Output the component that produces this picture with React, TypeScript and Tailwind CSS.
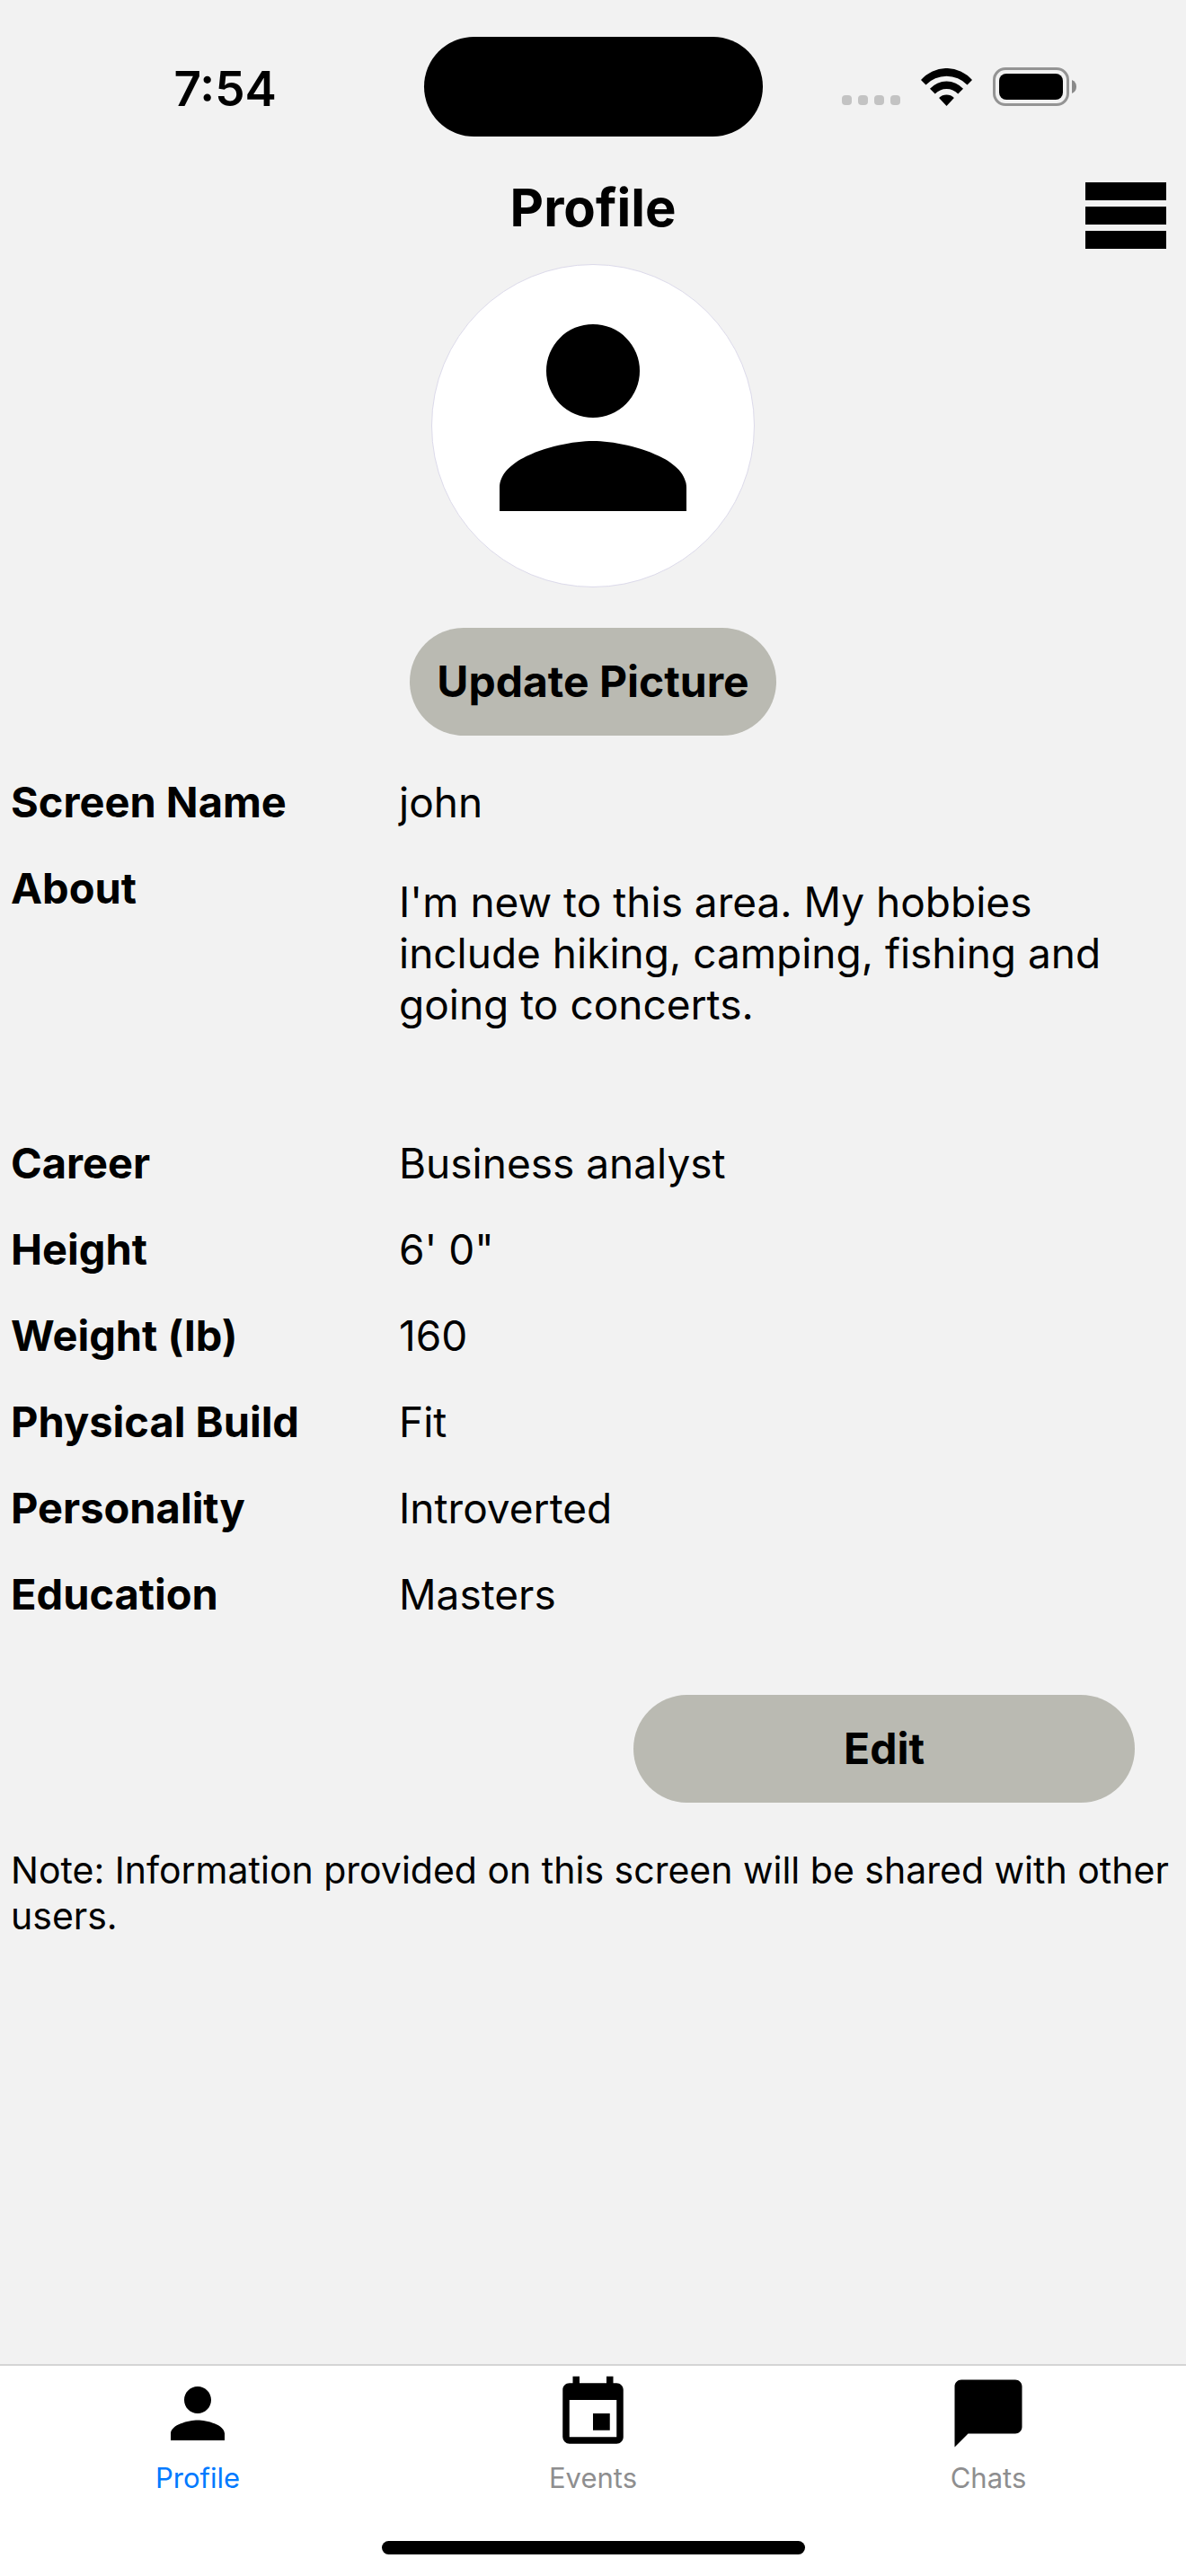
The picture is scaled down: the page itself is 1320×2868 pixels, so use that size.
import { useState } from "react";
import { MdChatBubble, MdEvent, MdPerson } from "react-icons/md";

const details = [
  { label: "Career", value: "Business analyst" },
  { label: "Height", value: "6' 0\"" },
  { label: "Weight (lb)", value: "160" },
  { label: "Physical Build", value: "Fit" },
  { label: "Personality", value: "Introverted" },
  { label: "Education", value: "Masters" },
];

const tabs = [
  { name: "Profile", Icon: MdPerson },
  { name: "Events", Icon: MdEvent },
  { name: "Chats", Icon: MdChatBubble },
];

function StatusBar() {
  return (
    <div className="grid grid-cols-[1fr_auto_1fr] items-center pt-[41px] pb-[25px]">
      <div className="pt-1 pl-[30px] text-center text-[53px] leading-[60px] font-semibold">
        7:54
      </div>
      <div className="h-[111px] w-[377px] rounded-full bg-black" />
      <div className="flex items-center justify-center pr-[34px]">
        <div className="mr-[23px] flex gap-[7px] pt-[30px]">
          <span className="size-[11px] rounded-[4px] bg-[#c3c3c3]" />
          <span className="size-[11px] rounded-[4px] bg-[#c3c3c3]" />
          <span className="size-[11px] rounded-[4px] bg-[#c3c3c3]" />
          <span className="size-[11px] rounded-[4px] bg-[#c3c3c3]" />
        </div>
        <svg className="mr-[23px]" width="57" height="42" viewBox="0 0 57 42">
          <path d="M0 13A37.7 37.7 0 0 1 57 13L51.5 18.5A32 32 0 0 0 5.5 18.5Z" />
          <path d="M10 22.7A25 25 0 0 1 47 22.7L41.3 28.5A17.5 17.5 0 0 0 15.7 28.5Z" />
          <path d="M20.1 33A12 12 0 0 1 36.9 33L28.5 42Z" />
        </svg>
        <svg width="93" height="43" viewBox="0 0 93 43">
          <rect
            x="1.5"
            y="1.5"
            width="82"
            height="40"
            rx="12.5"
            fill="none"
            stroke="#949494"
            strokeWidth="3"
          />
          <rect x="7" y="7" width="71" height="29" rx="8" />
          <path d="M88 14Q93 16 93 21.5T88 29Z" fill="#8a8a8a" />
        </svg>
      </div>
    </div>
  );
}

function Row({ label, value }: { label: string; value: string }) {
  return (
    <div className="grid grid-cols-[1fr_2fr] py-5">
      <dt className="text-[47px] leading-[56px] font-bold">{label}</dt>
      <dd>{value}</dd>
    </div>
  );
}

export default function App() {
  const [active, setActive] = useState("Profile");

  return (
    <div className="flex min-h-screen flex-col bg-[#f2f2f2] font-['Inter',sans-serif] text-black">
      <StatusBar />
      <header className="grid h-[117px] grid-cols-3 items-start">
        <h1 className="col-start-2 pt-[18px] text-center text-[58px] leading-[72px] font-bold">
          Profile
        </h1>
        <button
          aria-label="Menu"
          className="mt-[26px] mr-[22px] flex flex-col gap-[7px] justify-self-end"
        >
          <span className="h-5 w-[90px] bg-black" />
          <span className="h-5 w-[90px] bg-black" />
          <span className="h-5 w-[90px] bg-black" />
        </button>
      </header>

      <main className="flex flex-1 flex-col">
        <div className="flex flex-col items-center gap-[45px]">
          <div className="flex size-[360px] items-center justify-center rounded-full border border-[#dcdaea] bg-white">
            <svg width="312" height="312" viewBox="0 -0.2 24 24">
              <path d="M12 11.1a4 4 0 1 0 0-8 4 4 0 0 0 0 8zM12 13.1c-2.67 0-8 1.34-8 4v2h16v-2c0-2.66-5.33-4-8-4z" />
            </svg>
          </div>
          <button className="h-[120px] rounded-full bg-[#babab2] px-[30px] text-5xl font-bold">
            Update Picture
          </button>
        </div>

        <dl className="mt-[26px] px-3 text-[46px] leading-[56px]">
          <Row label="Screen Name" value="john" />
          <div className="grid min-h-[306px] grid-cols-[1fr_2fr]">
            <dt className="pt-5 text-[47px] leading-[56px] font-bold">About</dt>
            <dd className="pt-[35px] pr-12 leading-[57px]">
              I'm new to this area. My hobbies include hiking, camping, fishing
              and going to concerts.
            </dd>
          </div>
          {details.map((d) => (
            <Row key={d.label} label={d.label} value={d.value} />
          ))}
        </dl>

        <button className="mt-16 mr-[57px] h-[120px] w-[558px] self-end rounded-full bg-[#babab2] text-5xl font-bold">
          Edit
        </button>
        <p className="mt-[50px] pr-2 pl-3 text-[41px] leading-[51px]">
          Note: Information provided on this screen will be shared with other
          users.
        </p>
      </main>

      <footer className="border-t-2 border-[#d5d5d5] bg-white pb-6">
        <nav className="grid grid-cols-3 pt-2">
          {tabs.map(({ name, Icon }) => (
            <button
              key={name}
              onClick={() => setActive(name)}
              className="flex flex-col items-center"
            >
              <Icon className="size-[90px]" />
              <span
                className={
                  active === name
                    ? "mt-[9px] text-[31px] leading-9 text-[#007aff]"
                    : "mt-[9px] text-[31px] leading-9 text-[#8e8e8f]"
                }
              >
                {name}
              </span>
            </button>
          ))}
        </nav>
        <div className="mx-auto mt-[52px] h-[15px] w-[471px] rounded-full bg-black" />
      </footer>
    </div>
  );
}
